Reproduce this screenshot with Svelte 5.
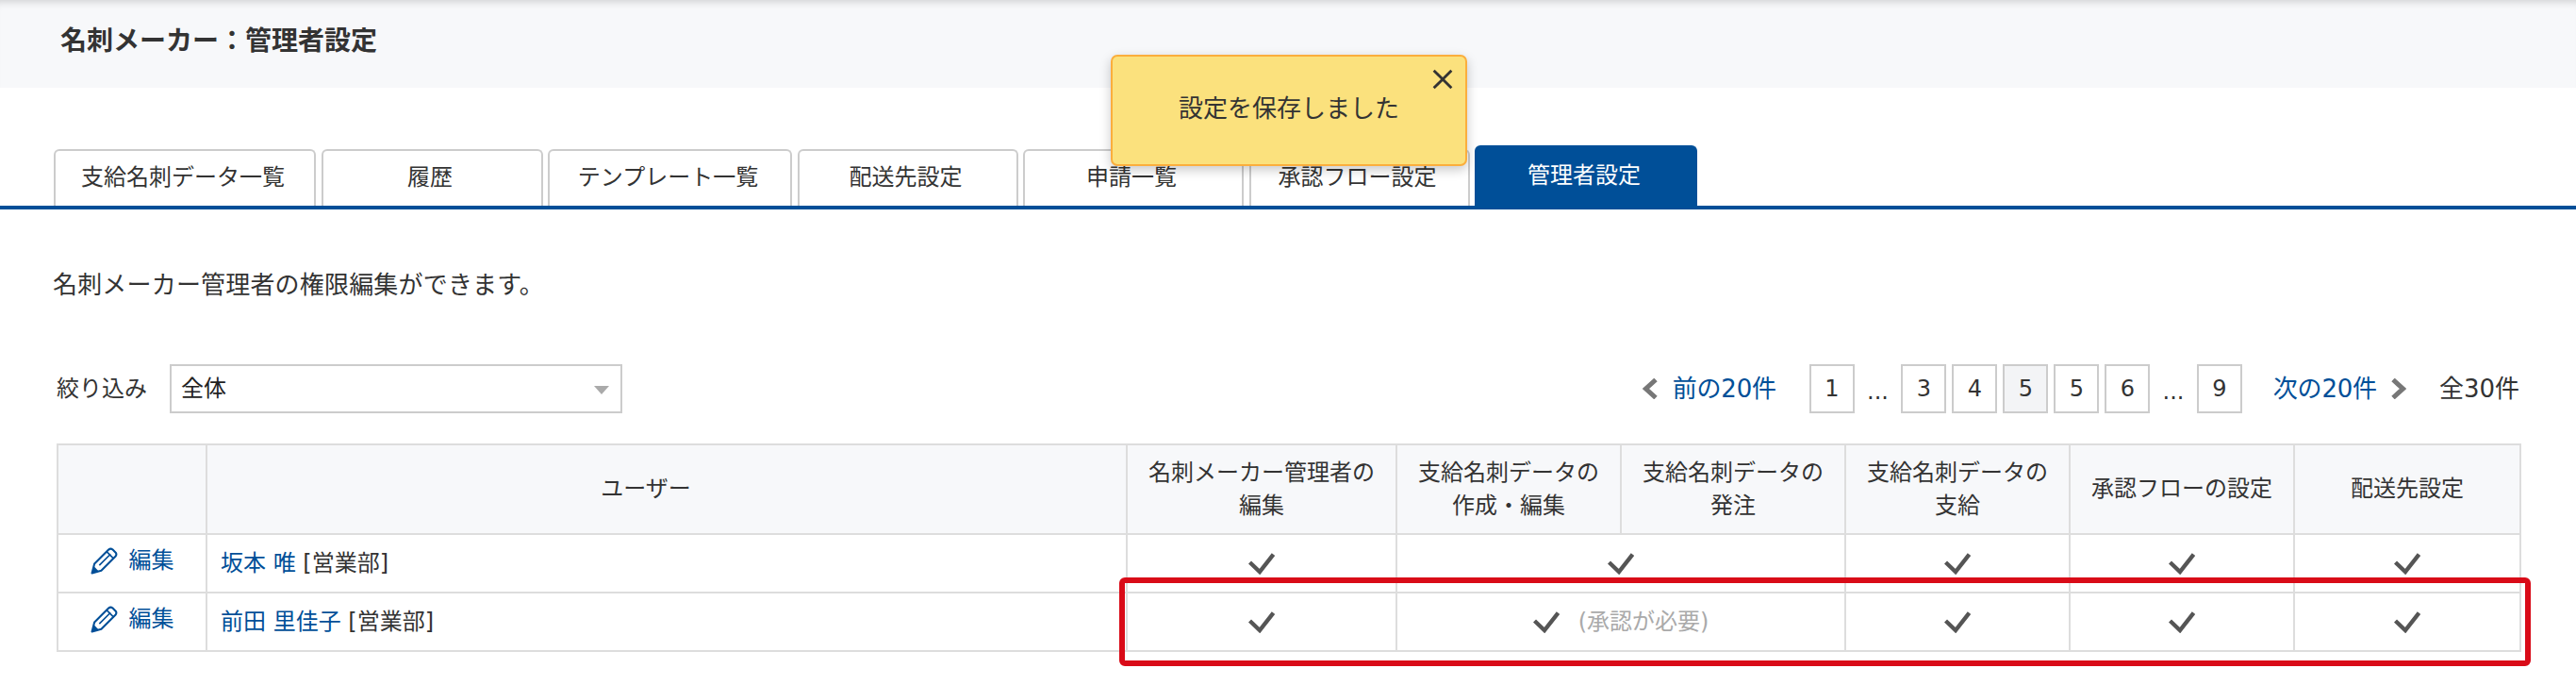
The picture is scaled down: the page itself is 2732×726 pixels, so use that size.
<script>
	const tabs = [
		{ label: '支給名刺データ一覧', width: 278 },
		{ label: '履歴', width: 235 },
		{ label: 'テンプレート一覧', width: 259 },
		{ label: '配送先設定', width: 234 },
		{ label: '申請一覧', width: 234 },
		{ label: '承認フロー設定', width: 234 },
		{ label: '管理者設定', width: 236, active: true }
	];
	const pages = ['1', '...', '3', '4', '5', '5', '6', '...', '9'];
	const users = [
		{ name: '坂本 唯', pending: false },
		{ name: '前田 里佳子', pending: true }
	];
</script>

{#snippet check()}
	<svg class="check" viewBox="0 0 28 24" width="28" height="24" aria-hidden="true">
		<path d="M1.5 11 L12 21 L26.5 2.5" fill="none" stroke="#555" stroke-width="4.4" />
	</svg>
{/snippet}

{#snippet pencil()}
	<svg class="pencil" viewBox="0 0 28 28" width="29" height="29" aria-hidden="true">
		<path
			d="M1.5 26.5 L4 17 L18.5 2.5 Q20.5 .8 22.5 2.2 L25.8 5.5 Q27.2 7.5 25.5 9.5 L11 24 Z"
			fill="none"
			stroke="currentColor"
			stroke-width="2"
			stroke-linejoin="round"
		/>
		<path d="M16.5 4.5 L23.5 11.5 M9 18.5 L20.5 7" fill="none" stroke="currentColor" stroke-width="1.6" />
		<path d="M1.5 26.5 L3.5 19.5 L8.5 24.5 Z" fill="currentColor" />
	</svg>
{/snippet}

<div class="page">
	<header class="app-header">
		<h1>名刺メーカー：管理者設定</h1>
	</header>

	<nav class="tabs">
		{#each tabs as tab}
			<div class="tab" class:active={tab.active} style="width: {tab.width}px">{tab.label}</div>
		{/each}
	</nav>

	<p class="lead">名刺メーカー管理者の権限編集ができます。</p>

	<div class="toolbar">
		<div class="filter">
			<span>絞り込み</span>
			<div class="select">全体</div>
		</div>
		<div class="pager">
			<svg class="chevron" viewBox="0 0 16 22" width="16" height="22" aria-hidden="true">
				<path d="M14 1.5 L3.5 11 L14 20.5" fill="none" stroke="#777" stroke-width="5" />
			</svg>
			<a class="pager-link prev">前の20件</a>
			<div class="pages">
				{#each pages as p, i}
					{#if p === '...'}
						<span class="dots">...</span>
					{:else}
						<span class="num" class:current={i === 4}>{p}</span>
					{/if}
				{/each}
			</div>
			<a class="pager-link next">次の20件</a>
			<svg class="chevron" viewBox="0 0 16 22" width="16" height="22" aria-hidden="true">
				<path d="M2 1.5 L12.5 11 L2 20.5" fill="none" stroke="#777" stroke-width="5" />
			</svg>
			<span class="total">全30件</span>
		</div>
	</div>

	<div class="table-wrap">
		<table>
			<colgroup>
				<col style="width: 158px" />
				<col style="width: 976px" />
				<col style="width: 286px" />
				<col style="width: 238px" />
				<col style="width: 238px" />
				<col style="width: 238px" />
				<col style="width: 238px" />
				<col style="width: 240px" />
			</colgroup>
			<thead>
				<tr>
					<th></th>
					<th class="user-head">ユーザー</th>
					<th>名刺メーカー管理者の<br />編集</th>
					<th>支給名刺データの<br />作成・編集</th>
					<th>支給名刺データの<br />発注</th>
					<th>支給名刺データの<br />支給</th>
					<th>承認フローの設定</th>
					<th>配送先設定</th>
				</tr>
			</thead>
			<tbody>
				{#each users as user}
					<tr>
						<td class="edit">
							<a class="edit-link">{@render pencil()}<span>編集</span></a>
						</td>
						<td class="user"><a>{user.name}</a> [営業部]</td>
						<td class="mark">{@render check()}</td>
						<td class="mark" colspan="2">
							<div class="span-mark">
								{@render check()}
								{#if user.pending}<span class="note">(承認が必要)</span>{/if}
							</div>
						</td>
						<td class="mark">{@render check()}</td>
						<td class="mark">{@render check()}</td>
						<td class="mark">{@render check()}</td>
					</tr>
				{/each}
			</tbody>
		</table>
		<div class="highlight"></div>
	</div>

	<div class="toast">
		<span>設定を保存しました</span>
		<svg class="close" viewBox="0 0 20 20" width="22" height="22" aria-hidden="true">
			<path d="M1.5 1.5 L18.5 18.5 M18.5 1.5 L1.5 18.5" fill="none" stroke="#333" stroke-width="2.6" />
		</svg>
	</div>
</div>

<style>
	:global(body) {
		background: #fff;
	}

	.page {
		position: relative;
		min-height: 726px;
		color: #333;
		font-family: 'DejaVu Sans', 'Noto Sans CJK JP', sans-serif;
		font-size: 24px;
		line-height: 35px;
	}

	.app-header {
		height: 93px;
		background: #f7f8fa;
		box-shadow: inset 0 9px 8px -7px rgba(0, 0, 0, 0.16);
		padding-left: 64px;
		display: flex;
		align-items: center;
		box-sizing: border-box;
		padding-bottom: 6px;
	}

	h1 {
		margin: 0;
		font-size: 28px;
		font-weight: 700;
		color: #333;
	}

	.tabs {
		margin-top: 61px;
		height: 68px;
		box-sizing: border-box;
		padding-left: 57px;
		border-bottom: 4px solid #004f98;
		display: flex;
		align-items: flex-end;
		gap: 5.5px;
	}

	.tab {
		box-sizing: border-box;
		height: 60px;
		border: 2px solid #ccc;
		border-bottom: none;
		border-radius: 6px 6px 0 0;
		display: flex;
		align-items: center;
		justify-content: center;
		padding: 0 4px 2px 0;
	}

	.tab.active {
		height: 64px;
		background: #004f98;
		border-color: #004f98;
		color: #fff;
	}

	.lead {
		margin: 62px 0 0 56px;
		font-size: 26px;
		line-height: 36px;
		letter-spacing: 0.18px;
		color: #333;
	}

	.toolbar {
		margin-top: 66px;
		padding: 0 60px;
		display: flex;
		justify-content: space-between;
		align-items: center;
	}

	.filter {
		display: flex;
		align-items: center;
		gap: 24px;
	}

	.select {
		box-sizing: border-box;
		width: 480px;
		height: 52px;
		border: 2px solid #ccc;
		padding-left: 10px;
		display: flex;
		align-items: center;
		position: relative;
		color: #222;
	}

	.select::after {
		content: '';
		position: absolute;
		right: 12px;
		top: 21px;
		border-left: 8px solid transparent;
		border-right: 8px solid transparent;
		border-top: 9px solid #aaa;
	}

	.pager {
		display: flex;
		align-items: center;
		font-size: 26px;
	}

	.pager-link {
		color: #004f98;
		letter-spacing: -0.2px;
	}

	.prev {
		margin: 0 35px 0 16px;
	}

	.next {
		margin: 0 15px 0 33px;
	}

	.total {
		margin-left: 35px;
	}

	.pages {
		display: flex;
		gap: 6px;
		font-size: 24px;
	}

	.num {
		box-sizing: border-box;
		width: 48px;
		height: 52px;
		border: 2px solid #ccc;
		display: flex;
		align-items: center;
		justify-content: center;
	}

	.num.current {
		background: #f3f4f6;
	}

	.dots {
		width: 37.5px;
		display: flex;
		align-items: center;
		justify-content: center;
		padding-top: 6px;
	}

	.table-wrap {
		margin: 32px 60px 0;
		position: relative;
		width: 2612px;
	}

	table {
		width: 2612px;
		table-layout: fixed;
		border-collapse: collapse;
	}

	th,
	td {
		border: 2px solid #ddd;
		padding: 0;
	}

	th {
		height: 93px;
		background: #f7f8fa;
		font-weight: 400;
		text-align: center;
	}

	.user-head {
		padding-right: 44px;
	}

	td {
		height: 60px;
	}

	.edit-link {
		display: flex;
		align-items: center;
		justify-content: center;
		gap: 12px;
		color: #004f98;
		margin-top: -6px;
	}

	.user {
		padding-left: 14px;
	}

	.user a {
		color: #004f98;
	}

	.mark {
		text-align: center;
	}

	.check {
		display: block;
		margin: 0 auto;
	}

	.span-mark {
		display: flex;
		align-items: center;
		justify-content: center;
		gap: 20px;
	}

	.span-mark .check {
		margin: 0;
	}

	.note {
		color: #aaa;
	}

	.highlight {
		position: absolute;
		box-sizing: border-box;
		left: 1127px;
		top: 142px;
		width: 1497px;
		height: 94px;
		border: 6px solid #d90b18;
		border-radius: 6px;
		pointer-events: none;
	}

	.toast {
		position: absolute;
		left: 1178px;
		top: 58px;
		box-sizing: border-box;
		width: 378px;
		height: 118px;
		background: #fbe17d;
		border: 2px solid #fbae3c;
		border-radius: 7px;
		box-shadow: 0 4px 12px rgba(0, 0, 0, 0.22);
		display: flex;
		align-items: center;
		justify-content: center;
		font-size: 26px;
		padding-bottom: 4px;
	}

	.close {
		position: absolute;
		right: 13px;
		top: 13px;
	}
</style>
